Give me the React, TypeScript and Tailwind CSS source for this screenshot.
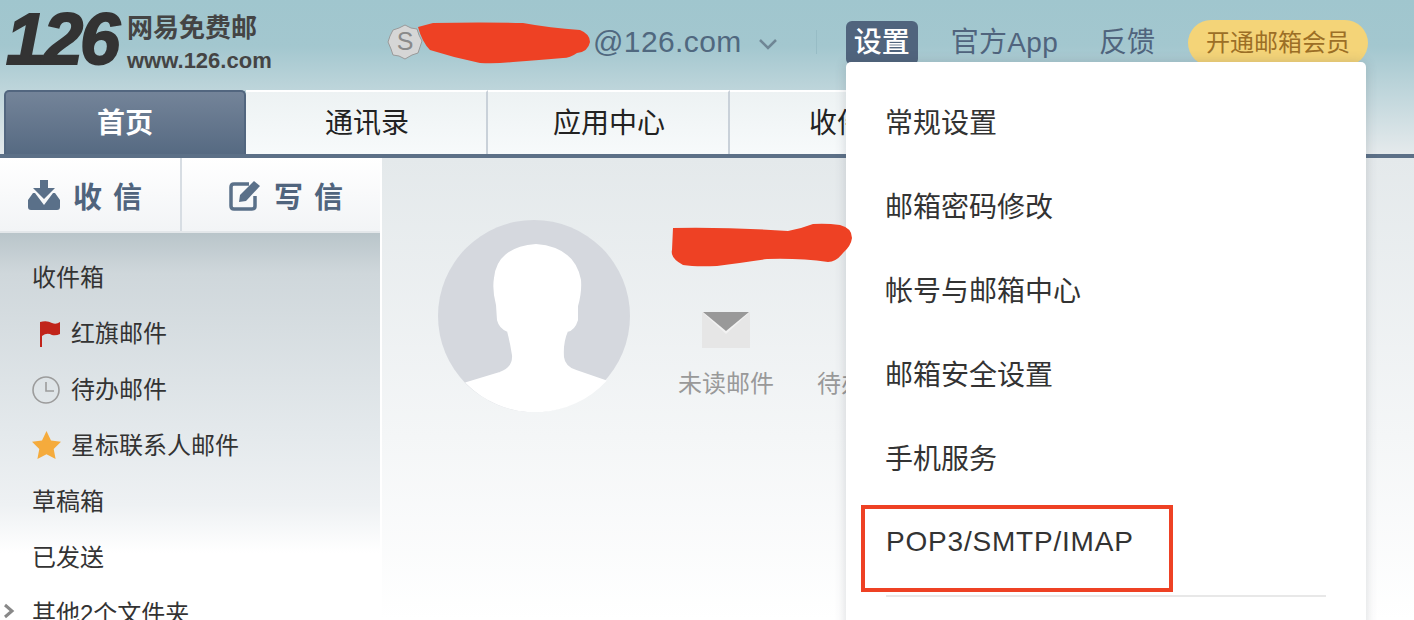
const cjk = "font-['Liberation_Sans','Noto_Sans_CJK_SC',sans-serif]";

function Badge() {
  return (
    <svg width="36" height="36" viewBox="0 0 36 36" className="shrink-0">
      <polygon
        points="18,1 24,4 30,5 32,11 35,17 33,23 31,29 25,31 18,35 12,32 6,31 4,25 1,18 3,12 6,6 12,4"
        fill="#d6d6d6"
        stroke="#9a9a9a"
        strokeWidth="1"
      />
      <text x="18" y="26" textAnchor="middle" fontSize="25" fill="#8a8a8a" fontFamily="Liberation Sans">
        S
      </text>
    </svg>
  );
}

function Header() {
  return (
    <div className="flex h-[90px] items-start">
      <div className="ml-[6px] flex w-[270px] shrink-0">
        <span className="mt-[-1px] w-[121px] text-[72px] leading-[80px] font-bold italic tracking-[-3px] whitespace-nowrap text-[#333] [-webkit-text-stroke:2px_#333] font-['Liberation_Sans',sans-serif]">
          126
        </span>
        <div className="flex flex-col text-[#444]">
          <span className={`mt-[13px] text-[26px] leading-[30px] font-bold ${cjk}`}>网易免费邮</span>
          <span className="mt-[6px] text-[22px] leading-[24px] font-bold font-['Liberation_Sans',sans-serif] whitespace-nowrap">
            www.126.com
          </span>
        </div>
      </div>
      <div className="ml-[111px] mt-[24px] flex items-center">
        <Badge />
        <span className="ml-[170px] text-[30px] leading-[36px] tracking-[0.4px] text-[#50687f] font-['Liberation_Sans',sans-serif]">
          @126.com
        </span>
        <svg width="20" height="12" viewBox="0 0 20 12" className="ml-[16px] mt-[4px]">
          <path d="M2 2 L10 10 L18 2" fill="none" stroke="#6f8695" strokeWidth="2.5" />
        </svg>
        <span className="ml-[38px] h-[24px] w-px bg-[#97bcc5]" />
      </div>
      <div className={`ml-[29px] mt-[20px] flex items-center text-[28px] leading-[44px] text-[#50647d] ${cjk}`}>
        <span className="h-[44px] w-[72px] rounded-[6px] bg-[#50647d] text-center font-medium text-white">设置</span>
        <span className="ml-[33px] tracking-[0.3px]">官方App</span>
        <span className="ml-[41px]">反馈</span>
        <span className="ml-[33px] h-[46px] w-[180px] rounded-full bg-[#f4d478] text-center text-[24px] leading-[46px] text-[#9c6f26]">
          开通邮箱会员
        </span>
      </div>
    </div>
  );
}

function Tabs() {
  const tabs = ["通讯录", "应用中心", "收件箱"];
  return (
    <div className={`flex h-[64px] pl-[4px] text-[28px] text-[#222] ${cjk}`}>
      <div className="flex w-[242px] items-center justify-center rounded-t-[5px] border-x-2 border-t-2 border-[#52667f] bg-gradient-to-b from-[#748499] to-[#566a82] pt-[2px] font-bold text-white">
        首页
      </div>
      {tabs.map((tab) => (
        <div
          key={tab}
          className="flex w-[242px] items-center justify-center border-t-2 border-r-2 border-t-white border-r-[#c9d1d9] bg-gradient-to-b from-[#edf2f3] to-[#f7fafb] pt-[2px] pl-[2px]"
        >
          {tab}
        </div>
      ))}
    </div>
  );
}

function ActionButtons() {
  return (
    <div className={`flex h-[75px] border-b-2 border-[#e3e7ea] bg-gradient-to-b from-white to-[#f2f4f6] text-[29px] font-bold tracking-[11px] text-[#50647d] ${cjk}`}>
      <div className="flex w-[182px] items-center border-r-2 border-[#d7dde3] pl-[28px]">
        <svg width="32" height="32" viewBox="0 0 32 32" className="mr-[13px] shrink-0">
          <path d="M12 1 H20 V9 H27 L16 20 L5 9 H12 Z" fill="#5a7089" />
          <path d="M0 21 L5 14 H7 L16 26 L25 14 H27 L32 21 V28 Q32 31 29 31 H3 Q0 31 0 28 Z" fill="#5a7089" />
        </svg>
        <span className="mt-[8px]">收信</span>
      </div>
      <div className="flex flex-1 items-center pl-[47px]">
        <svg width="32" height="34" viewBox="0 0 32 34" className="mr-[13px] shrink-0">
          <path d="M20 6 H5 Q2 6 2 9 V28 Q2 31 5 31 H23 Q26 31 26 28 V18" fill="none" stroke="#5a7089" strokeWidth="3.5" />
          <path d="M10 24 L11 17 L25 3 L31 8 L17 23 Z" fill="#5a7089" />
        </svg>
        <span className="mt-[8px]">写信</span>
      </div>
    </div>
  );
}

function Flag() {
  return (
    <svg width="22" height="26" viewBox="0 0 22 26" className="ml-[7px] mr-[10px] shrink-0">
      <path d="M1 1 V26 H3 V15 Q8 11 13 14 Q17 15 21 13 V1 Q17 4 13 2 Q8 -1 1 1 Z" fill="#c1241a" />
    </svg>
  );
}

function Clock() {
  return (
    <svg width="28" height="28" viewBox="0 0 28 28" className="mr-[11px] shrink-0">
      <circle cx="14" cy="14" r="13" fill="none" stroke="#9c9c9c" strokeWidth="1.6" />
      <path d="M14 6 V15 H22" fill="none" stroke="#9c9c9c" strokeWidth="1.6" />
    </svg>
  );
}

function Star() {
  return (
    <svg width="29" height="28" viewBox="0 0 29 28" className="mb-[3px] mr-[10px] shrink-0">
      <path d="M14.5 0 L19 9.5 L29 10.8 L21.7 18 L23.6 28 L14.5 23.2 L5.4 28 L7.3 18 L0 10.8 L10 9.5 Z" fill="#f5ab3c" />
    </svg>
  );
}

function SideItem({ icon, label }: { icon?: React.ReactNode; label: string }) {
  return (
    <div className="flex h-[56px] shrink-0 items-center pl-[32px]">
      {icon}
      {label}
    </div>
  );
}

function Sidebar() {
  return (
    <div className="w-[382px] shrink-0 border-r-2 border-white">
      <ActionButtons />
      <div className={`flex h-[400px] flex-col bg-[linear-gradient(to_bottom,#b9c5ca_0%,#cfd7db_10%,#e4e9ec_50%,#eef1f3_68%,#fff_80%)] pt-[17px] text-[24px] text-[#333] ${cjk}`}>
        <SideItem label="收件箱" />
        <SideItem icon={<Flag />} label="红旗邮件" />
        <SideItem icon={<Clock />} label="待办邮件" />
        <SideItem icon={<Star />} label="星标联系人邮件" />
        <SideItem label="草稿箱" />
        <SideItem label="已发送" />
        <div className="relative">
          <svg width="12" height="16" viewBox="0 0 12 16" className="absolute left-[3px] top-[17px]">
            <path d="M2 2 L9 8 L2 14" fill="none" stroke="#888" strokeWidth="3" />
          </svg>
          <SideItem label="其他2个文件夹" />
        </div>
      </div>
    </div>
  );
}

function Avatar() {
  return (
    <svg width="192" height="192" viewBox="0 0 192 192" className="shrink-0">
      <circle cx="96" cy="96" r="96" fill="#d5d8de" />
      <path
        d="M29 163 L62 153 Q76 148 75 135 Q73 122 70 111 Q62 108 60 100 L59 85 Q55 70 57 58 Q60 28 98 25 Q136 28 142 60 Q143 72 139 86 L139 100 Q136 110 129 111 Q124 122 125 137 Q126 147 138 151 L167 161 A96 96 0 0 1 29 163 Z"
        fill="#fff"
        stroke="#fff"
        strokeWidth="2"
      />
    </svg>
  );
}

function MainPanel() {
  return (
    <div className={`flex h-[462px] flex-1 bg-gradient-to-b from-[#e4e9eb] via-[#f4f6f7] via-60% to-white pl-[56px] pt-[62px] ${cjk}`}>
      <Avatar />
      <div className="ml-[48px] mt-[92px] flex gap-[43px] text-[24px] leading-[32px] text-[#999] whitespace-nowrap">
        <div className="flex w-[96px] flex-col items-center">
          <svg width="48" height="36" viewBox="0 0 48 36">
            <rect width="48" height="36" fill="#e6e6e6" />
            <path d="M0 0 H48 L24 22 Z" fill="#f2f2f2" />
            <path d="M1 0 H47 L24 19 Z" fill="#999" />
          </svg>
          <span className="mt-[20px]">未读邮件</span>
        </div>
        <div className="flex w-[96px] flex-col items-center">
          <span className="h-[36px] w-[36px] rounded-full bg-[#dcdcdc]" />
          <span className="mt-[20px]">待办邮件</span>
        </div>
      </div>
    </div>
  );
}

function SettingsMenu() {
  const items = ["常规设置", "邮箱密码修改", "帐号与邮箱中心", "邮箱安全设置", "手机服务"];
  return (
    <div className={`absolute left-[846px] top-[62px] h-[600px] w-[520px] rounded-[5px] bg-white px-[40px] pt-[20px] text-[28px] text-[#333] shadow-[0_0_12px_rgba(60,70,80,0.2)] ${cjk}`}>
      {items.map((item) => (
        <div key={item} className="-ml-[1px] flex h-[84px] items-center">
          {item}
        </div>
      ))}
      <div className="flex h-[84px] items-center pb-[4px] tracking-[0.8px]">POP3/SMTP/IMAP</div>
      <div className="mt-[9px] h-[2px] bg-[#e8e8e8]" />
    </div>
  );
}

export default function App() {
  return (
    <div className="relative h-[620px] w-[1414px] overflow-hidden bg-white">
      <div className="bg-gradient-to-b from-[#a0c6ce] via-[#a3c7cf] via-30% to-[#e5eaec]">
        <Header />
        <Tabs />
      </div>
      <div className="h-[4px] bg-[#5c7087]" />
      <div className="flex">
        <Sidebar />
        <MainPanel />
      </div>
      <SettingsMenu />
      {/* redaction scribbles and the red box drawn over the screenshot */}
      <svg width="1414" height="620" viewBox="0 0 1414 620" className="pointer-events-none absolute left-0 top-0">
        <path
          d="M418 27 L433 23 Q480 22 523 23 Q550 28 580 30 Q590 34 590 42 Q588 52 577 53 Q570 58 563 58 Q540 60 513 62 Q495 64 480 63 Q455 58 430 50 Q422 42 418 27 Z"
          fill="#ee4124"
        />
        <path
          d="M673 228 Q730 227 788 231 Q800 229 813 224 Q826 223 840 225 Q852 228 852 238 Q851 246 843 253 Q836 262 828 262 Q800 258 767 259 Q740 263 717 266 Q695 267 683 265 Q670 258 672 250 Z"
          fill="#ee4124"
        />
        <rect x="863" y="507" width="308" height="83" fill="none" stroke="#ee4124" strokeWidth="4" />
      </svg>
    </div>
  );
}
